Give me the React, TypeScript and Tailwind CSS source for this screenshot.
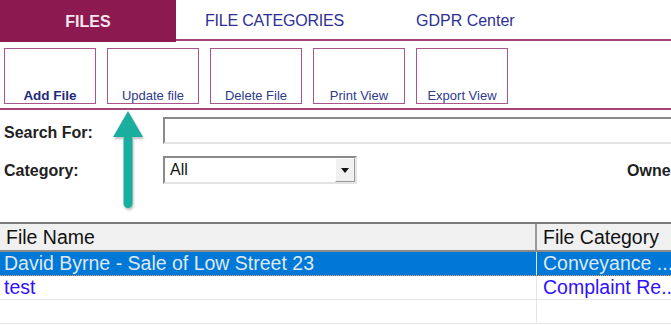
import React from "react";

const tabs = ["FILE CATEGORIES", "GDPR Center"];
const actions = [
  { label: "Add File", bold: true },
  { label: "Update file" },
  { label: "Delete File" },
  { label: "Print View" },
  { label: "Export View" },
];

const rows = [
  { name: "David Byrne - Sale of Low Street 23", category: "Conveyance ...", selected: true },
  { name: "test", category: "Complaint Re..." },
  { name: "", category: "" },
];

function UpArrow() {
  return (
    <svg
      className="absolute left-[110px] top-[108px] drop-shadow-[1px_2px_1px_rgba(0,0,0,0.25)]"
      width="40"
      height="104"
      viewBox="0 0 40 104"
    >
      <polygon points="18,3 33,29 3,29" fill="#1aae9f" />
      <rect x="13.5" y="27" width="9" height="73" rx="4.5" fill="#1aae9f" />
    </svg>
  );
}

export default function App() {
  return (
    <div className="relative w-[671px] h-[326px] overflow-hidden bg-white font-['Liberation_Sans',Arial,sans-serif]">
      {/* tabs */}
      <div className="flex h-[42px]">
        <div className="w-[176px] h-[42px] pt-[2px] bg-[#8c1a50] flex items-center justify-center text-[16px] font-bold text-[#f4e6ee]">
          FILES
        </div>
        <div className="flex-1 flex items-center pt-[3px] h-[41px] border-b-2 border-[#a5457c] text-[16px] text-[#2c2f96]">
          <span className="ml-[29px] tracking-[-0.2px]">{tabs[0]}</span>
          <span className="ml-[72px]">{tabs[1]}</span>
        </div>
      </div>

      {/* toolbar */}
      <div className="flex gap-[11px] pl-[4px] pt-[6px] pb-[4px] border-b-2 border-[#a5457c]">
        {actions.map((a) => (
          <div
            key={a.label}
            className="w-[92px] h-[56px] border-[1.5px] border-[#a9568a] flex items-end justify-center"
          >
            <span
              className={
                a.bold
                  ? "text-[13.5px] leading-[14px] font-bold text-[#1f2a80]"
                  : "text-[13px] leading-[14px] text-[#2e3a8c]"
              }
            >
              {a.label}
            </span>
          </div>
        ))}
      </div>

      {/* search form */}
      <div className="flex items-center h-[27px] mt-[7px]">
        <span className="w-[163px] shrink-0 pl-[4px] pt-[4px] text-[16px] font-bold text-[#222]">Search For:</span>
        <div className="w-[540px] shrink-0 h-[27px] border-2 border-t-[#8a8a8a] border-l-[#8a8a8a] border-b-[#e4e4e4] border-r-[#e4e4e4] bg-white" />
      </div>
      <div className="flex items-center h-[28px] mt-[12px]">
        <span className="w-[163px] shrink-0 pl-[4px] pt-[2px] text-[16px] font-bold text-[#222]">Category:</span>
        <div className="w-[194px] shrink-0 h-[28px] flex border-2 border-t-[#8a8a8a] border-l-[#8a8a8a] border-b-[#e4e4e4] border-r-[#e4e4e4] bg-white">
          <span className="flex-1 pl-[5px] text-[16px] leading-[24px] text-[#111]">All</span>
          <div className="w-[20px] h-[24px] bg-[#f0f0f0] border border-t-[#fff] border-l-[#fff] border-b-[#9a9a9a] border-r-[#9a9a9a] flex items-center justify-center">
            <svg width="8" height="5" viewBox="0 0 8 5">
              <polygon points="0,0 8,0 4,5" fill="#111" />
            </svg>
          </div>
        </div>
        <span className="ml-[270px] shrink-0 pt-[2px] whitespace-nowrap text-[16px] font-bold text-[#222]">Owner:</span>
      </div>

      {/* grid */}
      <div className="mt-[38px] border-t-2 border-[#7a7a7a] text-[19.5px]">
        <div className="flex h-[28px] bg-[#f0f0f0] border-b-2 border-[#8a8a8a] text-[#111]">
          <div className="w-[537px] shrink-0 pl-[6px] leading-[27px] border-r-2 border-[#9a9a9a]">File Name</div>
          <div className="flex-1 pl-[6px] leading-[27px] whitespace-nowrap">File Category</div>
        </div>
        {rows.map((r, i) => (
          <div
            key={i}
            className={
              r.selected
                ? "flex h-[24px] bg-[#0078d7] text-[#dfe8f2] border-b border-dotted border-[#e8a060]"
                : "flex h-[24px] text-[#3010ff] border-b border-[#e6e6e6]"
            }
          >
            <div className="w-[537px] shrink-0 pl-[4px] leading-[22px] border-r border-[#e6e6e6] whitespace-nowrap">{r.name}</div>
            <div className="flex-1 pl-[6px] leading-[22px] whitespace-nowrap">{r.category}</div>
          </div>
        ))}
      </div>

      <UpArrow />
    </div>
  );
}
